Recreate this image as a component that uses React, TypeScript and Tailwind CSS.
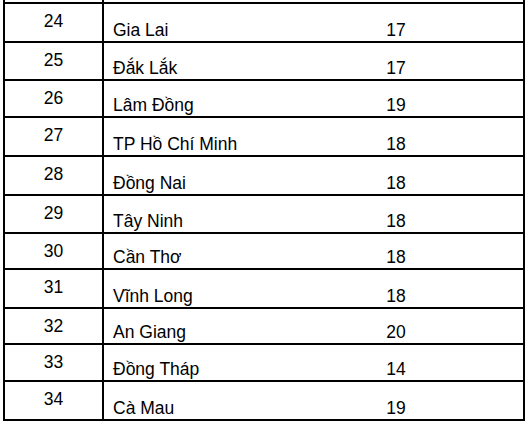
import React from "react";

const rows: { n: string; name: string; v: string; h: string }[] = [
  { n: "24", name: "Gia Lai", v: "17", h: "h-[39px]" },
  { n: "25", name: "Đắk Lắk", v: "17", h: "h-[38px]" },
  { n: "26", name: "Lâm Đồng", v: "19", h: "h-[37px]" },
  { n: "27", name: "TP Hồ Chí Minh", v: "18", h: "h-[39px]" },
  { n: "28", name: "Đồng Nai", v: "18", h: "h-[39px]" },
  { n: "29", name: "Tây Ninh", v: "18", h: "h-[38px]" },
  { n: "30", name: "Cần Thơ", v: "18", h: "h-[36px]" },
  { n: "31", name: "Vĩnh Long", v: "18", h: "h-[39px]" },
  { n: "32", name: "An Giang", v: "20", h: "h-[36px]" },
  { n: "33", name: "Đồng Tháp", v: "14", h: "h-[37px]" },
  { n: "34", name: "Cà Mau", v: "19", h: "h-[37px]" },
];

export default function App() {
  return (
    <div
      className="w-[530px] h-[426px] bg-white pl-[3px] text-black text-[17.5px] leading-[20px]"
      style={{ fontFamily: '"Liberation Sans", Arial, sans-serif' }}
    >
      <div className="w-[522px] border-x-2 border-b-2 border-black">
        <div className="flex h-[4px] border-b-2 border-black">
          <div className="w-[99px] border-r-2 border-black" />
        </div>
        {rows.map((r) => (
          <div key={r.n} className={`flex ${r.h} border-b-2 border-black last:border-b-0`}>
            <div className="w-[99px] border-r-2 border-black flex justify-center items-start pt-[7px]">
              {r.n}
            </div>
            <div className="w-[165px] flex items-end pl-[9px] pb-[1px]">{r.name}</div>
            <div className="flex-1 flex justify-center items-end pb-[1px]">{r.v}</div>
          </div>
        ))}
      </div>
    </div>
  );
}
